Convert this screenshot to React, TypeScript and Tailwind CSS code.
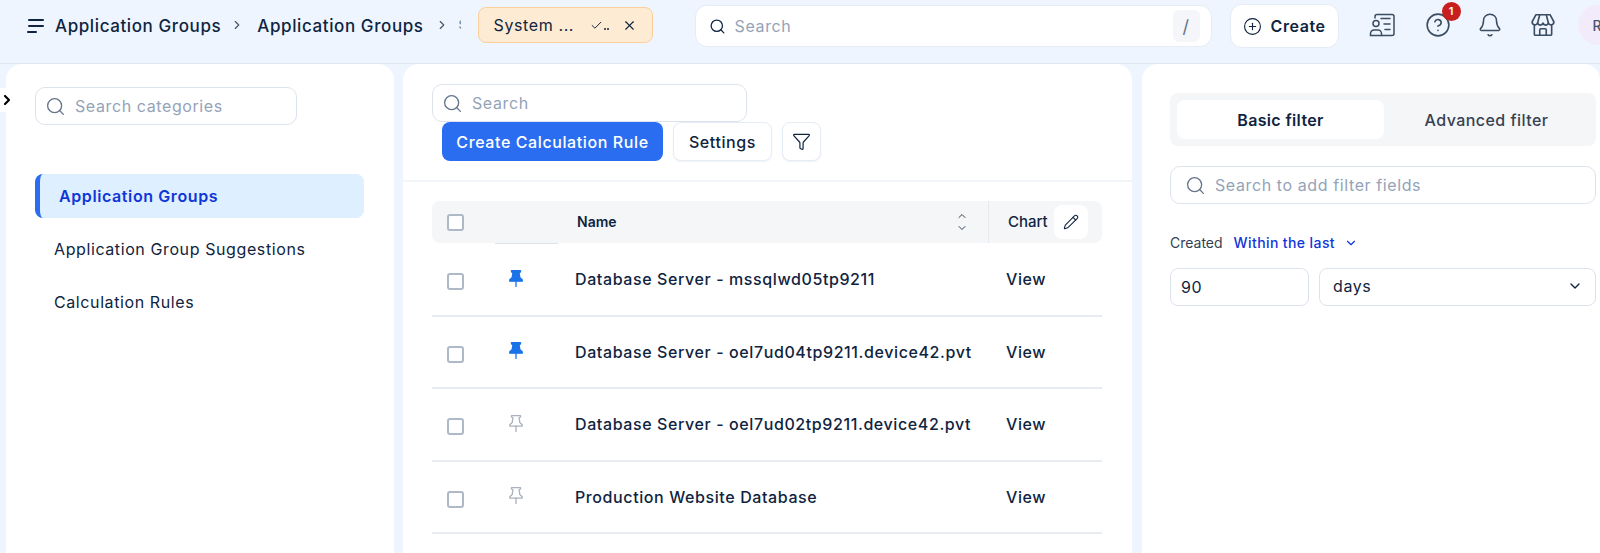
import { Bell, Check, ChevronDown, ChevronRight, ChevronUp, CircleHelp, CirclePlus, Funnel, Pencil, Search, X } from "lucide-react";

const rows = [
  { name: "Database Server - mssqlwd05tp9211", pinned: true },
  { name: "Database Server - oel7ud04tp9211.device42.pvt", pinned: true },
  { name: "Database Server - oel7ud02tp9211.device42.pvt", pinned: false },
  { name: "Production Website Database", pinned: false },
];

function SearchBox({ placeholder, className }: { placeholder: string; className: string }) {
  return (
    <div className={`flex items-center gap-[9px] rounded-[10px] border border-[#dde3ec] bg-white px-[9px] ${className}`}>
      <Search size={21} strokeWidth={1.5} className="text-[#64748b]" />
      <span className="text-[16px] text-[#94a3b8]">{placeholder}</span>
    </div>
  );
}

function ContactsIcon() {
  return (
    <svg width="26" height="24" viewBox="0 0 26 24" fill="none" stroke="#3b4d61" strokeWidth="1.5" strokeLinecap="round" className="mr-[3px]">
      <path d="M6 5V3.5A2 2 0 0 1 8 1.5h15a2 2 0 0 1 2 2v17a2 2 0 0 1-2 2H13" />
      <circle cx="7" cy="10.5" r="3" />
      <path d="M1.5 22.5v-2a3.5 3.5 0 0 1 3.5-3.5h4a3.5 3.5 0 0 1 3.5 3.5v2z" />
      <path d="M12 5.5h9M15 11h6M16 16.5h5" />
    </svg>
  );
}

function StoreIcon() {
  return (
    <svg width="26" height="26" viewBox="0 0 24 24" fill="none" stroke="#3b4d61" strokeWidth="1.5" strokeLinecap="round" strokeLinejoin="round">
      <path d="M5.5 2.5h13l3.5 6.5a2.6 2.6 0 0 1-5 1.2 2.6 2.6 0 0 1-5 0 2.6 2.6 0 0 1-5 0 2.6 2.6 0 0 1-5-1.2z" />
      <path d="M9 2.5 7 10.2M15 2.5l2 7.7" />
      <path d="M4 12.5v8a1 1 0 0 0 1 1h14a1 1 0 0 0 1-1v-8" />
      <path d="M9 21.5v-5a1 1 0 0 1 1-1h4a1 1 0 0 1 1 1v5" />
    </svg>
  );
}

function PinIcon({ pinned }: { pinned: boolean }) {
  const color = pinned ? "#1a73e8" : "#a9b1bd";
  return (
    <svg width="14" height="17" viewBox="0 0 14 17" fill={pinned ? color : "none"} stroke={color} strokeWidth="1.3" strokeLinejoin="round" className="ml-[45px] -mt-[2px]">
      <path d="M2.5.7h9v1.3l-1.4.8.7 4.8 2.4 2.2v1.4H.8V9.8l2.4-2.2.7-4.8-1.4-.8z" />
      <path d="M7 11v5.5" strokeLinecap="round" fill="none" />
    </svg>
  );
}

export default function App() {
  return (
    <div className="flex h-[553px] w-[1600px] flex-col overflow-hidden bg-[#eef5ff] font-['Inter',sans-serif] tracking-[0.6px] text-[#0f2440]">
      <header className="flex h-[64px] shrink-0 items-start border-b border-[#dfe6f0] pl-[27px]">
        <div className="flex h-[50px] shrink-0 items-center whitespace-nowrap">
          <svg width="17" height="15" viewBox="0 0 17 15" fill="#0f2440">
            <rect x="1" y="1" width="16" height="2" rx="1" />
            <rect x="1" y="7" width="16" height="2" rx="1" />
            <rect x="0" y="13" width="10" height="2" rx="1" />
          </svg>
          <span className="ml-[11px] mt-[3px] text-[17px] font-medium">Application Groups</span>
          <ChevronRight size={14} className="ml-[9px] mr-[13px] text-[#475569]" />
          <span className="mt-[3px] text-[17px] font-medium">Application Groups</span>
          <ChevronRight size={14} className="ml-[11px] text-[#475569]" />
          <span className="ml-[10px] w-[2px] overflow-hidden text-[12px] text-[#64748b]">S</span>
          <div className="ml-[17px] flex h-[36px] w-[175px] items-center rounded-lg border border-[#fbcf9a] bg-[#fdebd3] pl-[15px]">
            <span className="text-[16px]">System ...</span>
            <span className="ml-[16px] flex items-end">
              <Check size={13} strokeWidth={1.8} />
              <span className="mb-[2px] ml-px h-[2px] w-[2px] rounded-full bg-[#0f2440]" />
              <span className="mb-[2px] ml-px h-[2px] w-[2px] rounded-full bg-[#0f2440]" />
            </span>
            <X size={15} strokeWidth={1.8} className="ml-[13px]" />
          </div>
        </div>
        <div className="ml-[42px] mt-[5px] flex h-[42px] w-[517px] shrink-0 items-center rounded-xl border border-[#e6ecf5] bg-white pl-[13px] pr-[11px]">
          <Search size={17} strokeWidth={1.8} />
          <span className="ml-[9px] flex-1 text-[16px] text-[#94a3b8]">Search</span>
          <span className="flex h-[32px] w-[27px] items-center justify-center rounded-md bg-[#f4f6f9] text-[18px] text-[#64748b]">/</span>
        </div>
        <div className="ml-[18px] mt-[4px] flex h-[44px] w-[109px] shrink-0 items-center justify-center gap-[9px] rounded-xl border border-[#e6ecf5] bg-white">
          <CirclePlus size={19} strokeWidth={1.4} />
          <span className="text-[16px] font-semibold">Create</span>
        </div>
        <div className="ml-[30px] mt-[12px] flex shrink-0 items-center gap-[27px] text-[#3b4d61]">
          <ContactsIcon />
          <div className="relative">
            <CircleHelp size={26} strokeWidth={1.5} />
            <span className="absolute -right-[10px] -top-[10px] flex h-[19px] w-[19px] items-center justify-center rounded-full bg-[#c81e1e] text-[11px] font-semibold tracking-normal text-white">1</span>
          </div>
          <Bell size={26} strokeWidth={1.4} className="-ml-px" />
          <StoreIcon />
        </div>
        <div className="ml-[22px] mt-[5px] flex h-[40px] w-[40px] shrink-0 items-center rounded-full bg-[#f1ebfb] pl-[15px] text-[14px] font-medium text-[#475569]">R</div>
      </header>

      <main className="flex min-h-0 flex-1 gap-[9px] pl-[6px]">
        <aside className="relative w-[388px] shrink-0 rounded-t-2xl bg-white px-[29px] pt-[23px]">
          <div className="absolute -left-[6px] top-[24px] flex h-[24px] w-[18px] items-center rounded-r-full bg-white">
            <ChevronRight size={16} strokeWidth={3.2} className="-ml-px text-black" />
          </div>
          <SearchBox placeholder="Search categories" className="h-[38px] w-[262px]" />
          <nav className="mt-[49px] flex w-[329px] flex-col">
            <div className="flex h-[44px] items-center rounded-lg border-l-[5px] border-[#2a6df0] bg-[#deefff] pl-[19px] text-[16px] font-semibold text-[#1036d8]">
              Application Groups
            </div>
            <div className="flex h-[62px] items-center pl-[19px] text-[16px]">Application Group Suggestions</div>
            <div className="flex h-[44px] items-center pl-[19px] text-[16px]">Calculation Rules</div>
          </nav>
        </aside>

        <section className="w-[729px] shrink-0 rounded-t-2xl bg-white">
          <div className="h-[118px] border-b-2 border-[#f1f4f8] pl-[29px] pt-[20px]">
            <SearchBox placeholder="Search" className="h-[38px] w-[315px]" />
            <div className="ml-[10px] flex gap-[10px]">
              <button className="h-[39px] w-[221px] rounded-lg bg-[#2a6df0] text-[16px] font-medium text-white">Create Calculation Rule</button>
              <button className="h-[39px] w-[99px] rounded-lg border border-[#e6ecf5] bg-white text-[16px] font-medium shadow-[0_1px_2px_rgba(15,36,64,0.06)]">Settings</button>
              <button className="flex h-[39px] w-[39px] items-center justify-center rounded-lg border border-[#e6ecf5] bg-white shadow-[0_1px_2px_rgba(15,36,64,0.06)]">
                <Funnel size={19} strokeWidth={1.5} />
              </button>
            </div>
          </div>

          <div className="ml-[29px] mt-[19px] w-[670px]">
            <div className="flex h-[42px] items-center rounded-lg bg-[#f4f6f8] pl-[15px] text-[14px] font-semibold tracking-normal">
              <input type="checkbox" readOnly className="h-[17px] w-[17px] appearance-none rounded-[3px] border-2 border-[#aeb8c6] bg-white" />
              <span className="mb-[2px] ml-[113px] w-[379px]">Name</span>
              <span className="flex flex-col text-[#334155]">
                <ChevronUp size={12} />
                <ChevronDown size={12} />
              </span>
              <span className="ml-[20px] flex h-full items-center border-l border-[#e6e9ee] pl-[19px] text-[15px] font-medium">Chart</span>
              <span className="ml-[6px] flex h-[34px] w-[34px] items-center justify-center rounded-lg bg-white">
                <Pencil size={16} strokeWidth={1.6} />
              </span>
            </div>
            <div className="ml-[63px] h-px w-[63px] bg-[#dfe3e9]" />
            {rows.map((row) => (
              <div key={row.name} className="flex h-[72.5px] items-center border-b-2 border-[#e8ebf0] pl-[15px]">
                <input type="checkbox" readOnly className="mt-[5px] h-[17px] w-[17px] appearance-none rounded-[3px] border-2 border-[#aeb8c6] bg-white" />
                <PinIcon pinned={row.pinned} />
                <span className="ml-[52px] w-[431px] text-[16px] font-medium">{row.name}</span>
                <span className="text-[16px] font-medium">View</span>
              </div>
            ))}
          </div>
        </section>

        <aside className="ml-px min-w-0 flex-1 rounded-t-2xl bg-white pl-[28px] pr-[4px] pt-[29px]">
          <div className="flex h-[53px] items-center rounded-lg bg-[#f4f6f8] px-[7px]">
            <div className="flex h-[39px] w-[207px] items-center justify-center rounded-lg bg-white text-[16px] font-semibold tracking-[0.35px]">Basic filter</div>
            <div className="flex h-[39px] flex-1 items-center justify-center text-[16px] font-medium tracking-[0.45px] text-[#374151]">Advanced filter</div>
          </div>
          <SearchBox placeholder="Search to add filter fields" className="mt-[20px] h-[38px] pl-[14px]" />
          <div className="mt-[28px] flex items-center text-[14px]">
            <span className="tracking-normal text-[#334155]">Created</span>
            <span className="ml-[11px] font-medium tracking-[0.4px] text-[#1036d8]">Within the last</span>
            <ChevronDown size={14} className="ml-[9px] text-[#1036d8]" />
          </div>
          <div className="mt-[15px] flex gap-[10px]">
            <div className="flex h-[38px] w-[139px] items-center rounded-lg border border-[#dde3ec] pl-[10px] text-[16px]">90</div>
            <div className="flex h-[38px] flex-1 items-center justify-between rounded-lg border border-[#dde3ec] pb-[2px] pl-[13px] pr-[12px] text-[16px]">
              days
              <ChevronDown size={16} />
            </div>
          </div>
        </aside>
      </main>
    </div>
  );
}
